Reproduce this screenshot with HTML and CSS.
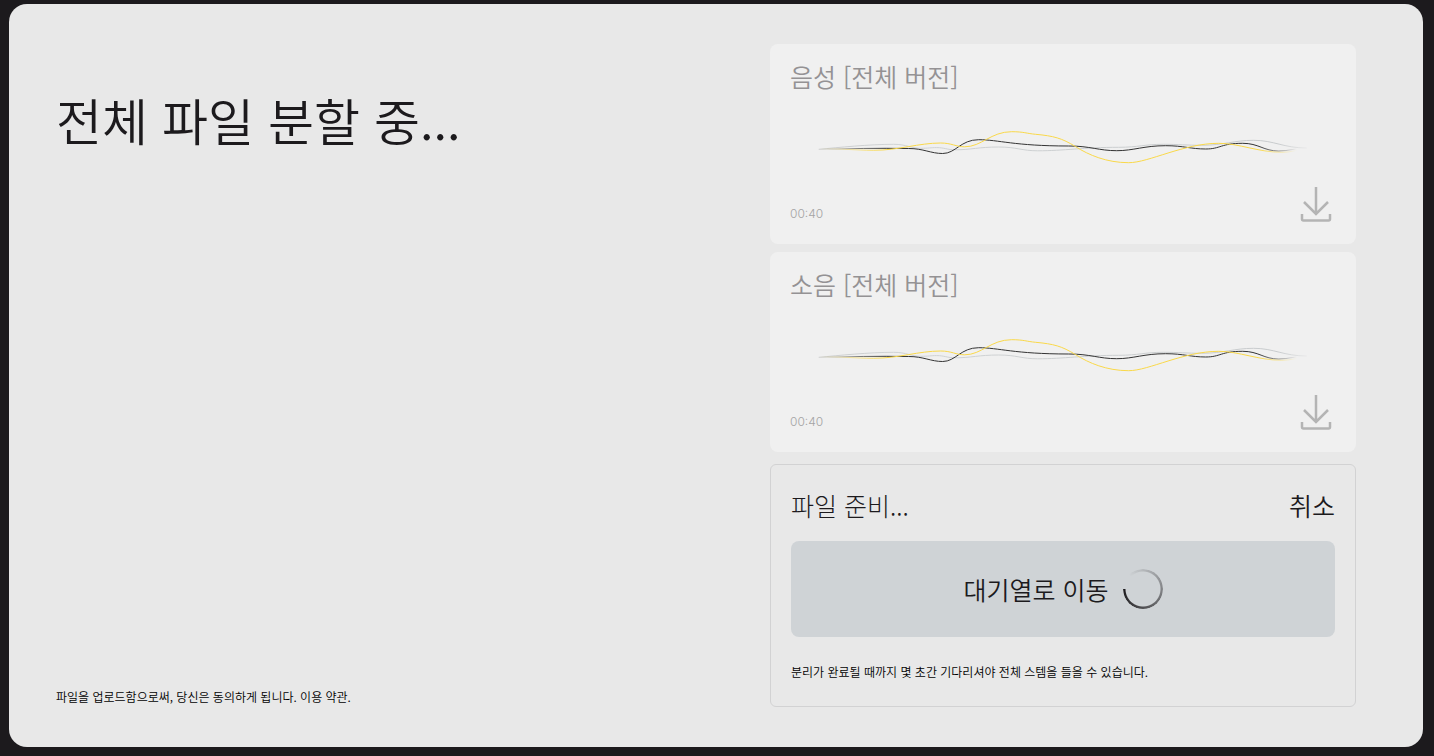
FILE: index.html
```html
<!DOCTYPE html>
<html lang="ko">
<head>
    <meta charset="UTF-8">
    <meta name="viewport" content="width=device-width, initial-scale=1">
    <title>전체 파일 분할 중...</title>
    <link rel="stylesheet" href="styles.css">
</head>
<body>
    <!-- shared drawings -->
    <svg class="sprite" aria-hidden="true">
        <defs>
            <linearGradient id="fade-dark" gradientUnits="userSpaceOnUse" x1="0" y1="0" x2="488" y2="0">
                <stop offset="0" stop-color="#333" stop-opacity="0"/>
                <stop offset="0.14" stop-color="#333"/>
                <stop offset="0.9" stop-color="#333"/>
                <stop offset="0.98" stop-color="#333" stop-opacity="0"/>
            </linearGradient>
            <linearGradient id="fade-yellow" gradientUnits="userSpaceOnUse" x1="0" y1="0" x2="488" y2="0">
                <stop offset="0" stop-color="#f9d849" stop-opacity="0"/>
                <stop offset="0.14" stop-color="#f9d849"/>
                <stop offset="0.9" stop-color="#f9d849"/>
                <stop offset="0.98" stop-color="#f9d849" stop-opacity="0"/>
            </linearGradient>
            <linearGradient id="fade-gray" gradientUnits="userSpaceOnUse" x1="0" y1="0" x2="488" y2="0">
                <stop offset="0" stop-color="#b9bcbe" stop-opacity="0.6"/>
                <stop offset="0.14" stop-color="#d0d3d4"/>
                <stop offset="0.94" stop-color="#c8cbcd"/>
                <stop offset="1" stop-color="#c8cbcd" stop-opacity="0.2"/>
            </linearGradient>
        </defs>
        <symbol id="wave" viewBox="0 0 488 40">
            <path stroke="url(#fade-gray)" d="M0 21.300C20 19.500 50 16.300 75 16.300C88 16.300 92 20.300 102 20.300C110 20.300 112 19.600 118 19.600C126 19.600 128 21.800 137 21.800C152 21.800 160 19 180 19C198 19 203 22.800 219 22.800C245 22.800 265 19.300 300 19.300C320 19.300 325 16.300 345 16.300C360 16.300 368 17.300 383 17.300C405 17.300 415 12.300 435 12.300C455 12.300 465 20 488 20"/>
            <path stroke="url(#fade-dark)" d="M0 21.500C30 20.500 60 20 90 20.500C105 20.500 112 25.500 124 25.500C137 25.500 142 11.700 160 11.700C180 11.700 195 18 250 18C272 18 280 22.700 298 22.700C315 22.700 325 17.700 347 17.700C365 17.700 372 21 387 21C402 21 402 15.300 424 15.300C440 15.300 445 23 460 23C470 23 478 20 488 20"/>
            <path stroke="url(#fade-yellow)" d="M0 21C25 20.500 35 22.300 55 22.300C80 22.300 100 15 122 15C133 15 137 18.800 146 18.800C163 18.800 172 3.700 193 3.700C205 3.700 208 5.500 217 6.300C235 8 243 10 257 18.700C270 27 288 34.700 310 34.700C330 34.700 365 15.300 400 15.300C420 15.300 440 24.300 463 24.300C473 24.300 478 22 488 20"/>
        </symbol>
        <symbol id="download" viewBox="0 0 32 36">
            <path d="M16 1V28M4 16L16 28L28 16M2 28V33Q2 34.500 3.500 34.500H28.500Q30 34.500 30 33V28"/>
        </symbol>
    </svg>

    <main class="panel">
        <section class="intro">
            <h1>전체 파일 분할 중...</h1>
            <p class="note">파일을 업로드함으로써, 당신은 동의하게 됩니다. <a href="#">이용 약관.</a></p>
        </section>

        <section class="results">
            <article class="track">
                <h2>음성 [전체 버전]</h2>
                <svg class="wave" aria-hidden="true"><use href="#wave"/></svg>
                <div class="track-footer">
                    <time>00:40</time>
                    <button class="download" aria-label="음성 다운로드" disabled>
                        <svg aria-hidden="true"><use href="#download"/></svg>
                    </button>
                </div>
            </article>

            <article class="track">
                <h2>소음 [전체 버전]</h2>
                <svg class="wave" aria-hidden="true"><use href="#wave"/></svg>
                <div class="track-footer">
                    <time>00:40</time>
                    <button class="download" aria-label="소음 다운로드" disabled>
                        <svg aria-hidden="true"><use href="#download"/></svg>
                    </button>
                </div>
            </article>

            <div class="prepare">
                <div class="prepare-header">
                    <h2>파일 준비...</h2>
                    <button class="cancel">취소</button>
                </div>
                <button class="queue">대기열로 이동 <span class="spinner"></span></button>
                <p class="note">분리가 완료될 때까지 몇 초간 기다리셔야 전체 스템을 들을 수 있습니다.</p>
            </div>
        </section>
    </main>
</body>
</html>
```
FILE: styles.css
```css
* {
    box-sizing: border-box;
}

body {
    margin: 0;
    padding: 4px 11px 9px 9px;
    min-height: 100vh;
    display: flex;
    background: #1c1a1d;
    color: #1c1a1d;
    font-family: "Noto Sans CJK KR", sans-serif;
    font-weight: 350;
}

h1,
h2,
p {
    margin: 0;
    font-weight: 350;
}

button {
    padding: 0;
    border: none;
    background: none;
    color: inherit;
    font: inherit;
    cursor: pointer;
}

.sprite {
    position: absolute;
    width: 0;
    height: 0;
}

/* Main panel */
.panel {
    flex: 1;
    display: grid;
    grid-template-columns: 1fr 1fr;
    gap: 128px;
    padding: 40px 67px 40px 47px;
    border-radius: 18px;
    background: #e8e8e8;
}

.intro {
    display: flex;
    flex-direction: column;
    justify-content: space-between;
    padding-top: 39px;
}

.intro h1 {
    font-size: 50px;
    line-height: 72px;
    white-space: nowrap;
}

.note {
    color: #000;
    font-size: 12px;
    line-height: 20px;
}

.note a {
    color: inherit;
    text-decoration: none;
}

h2,
.cancel,
.queue {
    font-size: 25px;
    line-height: 32px;
}

/* Track cards */
.results {
    display: flex;
    flex-direction: column;
    gap: 8px;
}

.track {
    height: 200px;
    display: flex;
    flex-direction: column;
    padding: 16px 20px 22px;
    border-radius: 8px;
    background: #f0f0f0;
}

.track h2 {
    color: #949294;
}

.wave {
    align-self: center;
    width: 90%;
    height: 40px;
    margin-top: 36px;
    fill: none;
    stroke-width: 1;
}

.track-footer {
    display: flex;
    justify-content: space-between;
    align-items: flex-end;
    margin-top: auto;
}

.track-footer time {
    color: #a5a4a5;
    font: 300 12px/16px Inter, sans-serif;
}

.download {
    padding: 0 4px;
    cursor: default;
}

.download svg {
    display: block;
    width: 32px;
    height: 36px;
    fill: none;
    stroke: #b4b4b4;
    stroke-width: 2.5;
}

/* Preparing box */
.prepare {
    flex: 1;
    margin-top: 4px;
    padding: 24px 20px;
    border: 1px solid #d2d2d3;
    border-radius: 6px;
}

.prepare-header {
    display: flex;
    justify-content: space-between;
    margin-bottom: 20px;
}

.prepare-header h2 {
    font-weight: 300;
}

.queue {
    width: 100%;
    height: 96px;
    display: flex;
    justify-content: center;
    align-items: center;
    gap: 14px;
    margin-bottom: 25px;
    border-radius: 8px;
    background: #cfd3d6;
}

.spinner {
    width: 40px;
    height: 40px;
    border-radius: 50%;
    background: conic-gradient(from -45deg, transparent, #1c1a1d 315deg, transparent 315deg);
    mask: radial-gradient(closest-side, transparent 17px, #000 18px);
}
```
